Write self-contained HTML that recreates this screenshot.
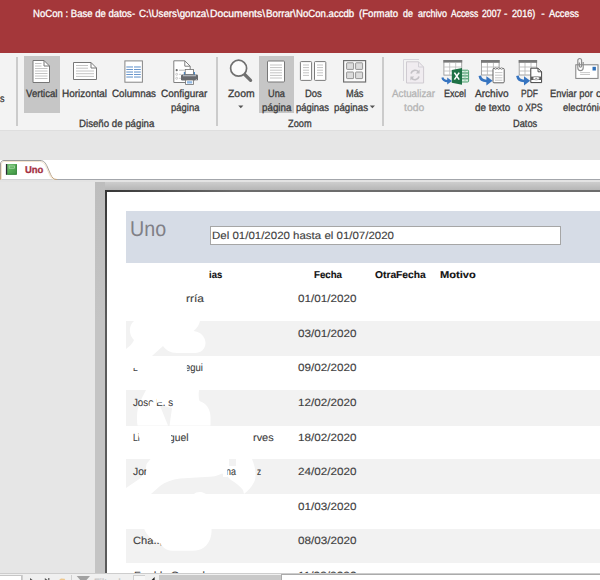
<!DOCTYPE html>
<html lang="es"><head><meta charset="utf-8"><title>NoCon : Base de datos - Access</title>
<style>
html,body{margin:0;padding:0;background:#e6e6e6}
#app{position:relative;width:600px;height:580px;overflow:hidden;background:#e6e6e6;font-family:"Liberation Sans",sans-serif}
#app div,#app svg{position:absolute}
.t{position:absolute;white-space:pre;transform-origin:0 0;line-height:1;-webkit-text-stroke:0.3px currentColor;text-rendering:geometricPrecision}
#titlebar{left:0;top:0;width:600px;height:53px;background:#a4373a}
#ribbon{left:0;top:53px;width:600px;height:77px;background:#f3f3f3}
#ribbon-edge{left:0;top:130px;width:600px;height:1px;background:#dedede}
.sep{top:57px;width:1.6px;height:69px;background:#cbcbcb}
.sel{top:56px;height:57px;background:#c6c6c6}
#tabstrip{left:0;top:160px;width:600px;height:19px;background:#fff}
#tabline{left:0;top:179px;width:600px;height:1px;background:#a3a6ab}
#preview{left:0;top:180px;width:600px;height:394px;background:#e6e6e6}
#shadow-l{left:95px;top:182px;width:10px;height:392px;background:linear-gradient(#bdbdbd,#c4c4c4 140px)}
#shadow-t{left:95px;top:182px;width:505px;height:8px;background:linear-gradient(#cdcdcd,#b6b6b6)}
#page{left:105px;top:190px;width:495px;height:384px;background:#fff}
#band{left:126px;top:211px;width:474px;height:52px;background:#d6dce6}
#tbox{left:210px;top:226px;width:351px;height:19px;box-sizing:border-box;background:#fff;border:1px solid #a6a6a6}
.alt{left:126px;width:474px;background:#f2f2f2}
#nav{left:0;top:573px;width:600px;height:7px;background:#f0f0f0;border-top:1px solid #cdcdcd;box-sizing:border-box}
#nav-rec{left:0;top:575px;width:22px;height:5px;background:#fff;border-top:1px solid #c6c6c6;border-right:1px solid #c6c6c6;box-sizing:border-box}
.nsep{top:575px;width:1px;height:5px;background:#d0d0d0}
#nav-track{left:159px;top:575px;width:122px;height:5px;background:#c9c9c9}
#nav-thumb{left:281px;top:574px;width:320px;height:7px;background:#fff;border:1px solid #ababab;box-sizing:border-box}
#pb-l{left:105px;top:190px;width:2px;height:383px;background:linear-gradient(#363636,#5a5a5a 130px)}
#pb-t{left:105px;top:190px;width:495px;height:1.5px;background:linear-gradient(90deg,#363636,#6c6c6c 130px)}
#lightband{left:0;top:180px;width:600px;height:2px;background:#e3e3e3}
#nav-btn{left:134px;top:575px;width:11px;height:5px;background:#f6f6f6;border-top:1px solid #cfcfcf;box-sizing:border-box}
#nav,#nav-rec,.nsep,#nav-track,#nav-thumb,#nav-btn,.navic{z-index:7}
.t.nv{z-index:8}
.blob{z-index:3}
.t{z-index:4}
.patch{z-index:5}
.t.big{-webkit-text-stroke:0}
.grp{left:0;top:0;width:0;height:0}
#report-text .t{-webkit-text-stroke:0.12px currentColor}
#report-text .t.big{-webkit-text-stroke:0}

</style></head>
<body>
<div id="app">
<div id="titlebar"></div>
<div id="ribbon"></div>
<div id="ribbon-edge"></div>
<div class="sep" style="left:16.2px"></div>
<div class="sep" style="left:216.2px"></div>
<div class="sep" style="left:382.4px"></div>
<div class="sel" style="left:24px;width:36px"></div>
<div class="sel" style="left:259px;width:35px"></div>
<div id="tabstrip"></div>
<div id="tabline"></div>
<div id="preview"></div>
<div id="lightband"></div>
<div id="shadow-t"></div>
<div id="shadow-l"></div>
<div id="page"></div>
<div id="pb-l"></div>
<div id="pb-t"></div>
<div id="band"></div>
<div id="tbox"></div>
<div class="alt" style="top:321px;height:34.5px"></div>
<div class="alt" style="top:390px;height:35.5px"></div>
<div class="alt" style="top:459px;height:34.5px"></div>
<div class="alt" style="top:528.6px;height:34px"></div>
<div id="nav"></div>

<!-- Vertical -->
<svg class="ic" style="left:30px;top:58px" width="24" height="28" viewBox="30 58 24 28">
 <path d="M33 60.5H44L49.5 66V82.5H33Z" fill="#fff" stroke="#777" stroke-width="1"/>
 <path d="M44 60.5V66H49.5" fill="none" stroke="#777" stroke-width="1"/>
 <g stroke="#c4c4c4" stroke-width="1"><path d="M35 63.5H41.5M35 66H41.5M35 68.5H47.5M35 71H47.5M35 73.5H47.5M35 76H47.5M35 78.5H47.5"/></g>
</svg>
<!-- Horizontal -->
<svg class="ic" style="left:70px;top:58px" width="30" height="28" viewBox="70 58 30 28">
 <path d="M73.5 62.5H91L96.5 68V79.5H73.5Z" fill="#fff" stroke="#777" stroke-width="1"/>
 <path d="M91 62.5V68H96.5" fill="none" stroke="#777" stroke-width="1"/>
 <g stroke="#c4c4c4" stroke-width="1"><path d="M76 65.5H88M76 68.2H88M76 71H94M76 73.7H94M76 76.4H94"/></g>
</svg>
<!-- Columnas -->
<svg class="ic" style="left:121px;top:58px" width="26" height="28" viewBox="121 58 26 28">
 <rect x="124.9" y="60.9" width="17.5" height="21.3" fill="#fff" stroke="#858585" stroke-width="1"/>
 <g fill="#a9c4e3"><rect x="126.3" y="66" width="6.7" height="1.9"/><rect x="134" y="66" width="6.8" height="1.9"/><rect x="126.3" y="71.1" width="6.7" height="1.9"/><rect x="134" y="71.1" width="6.8" height="1.9"/><rect x="126.3" y="76.1" width="6.7" height="1.9"/><rect x="134" y="76.1" width="6.8" height="1.9"/></g>
 <g fill="#5a8cc8"><rect x="126.3" y="69.1" width="6.7" height="0.9"/><rect x="134" y="69.1" width="6.8" height="0.9"/><rect x="126.3" y="74.1" width="6.7" height="0.9"/><rect x="134" y="74.1" width="6.8" height="0.9"/></g>
</svg>
<!-- Configurar pagina -->
<svg class="ic" style="left:170px;top:58px" width="32" height="28" viewBox="170 58 32 28">
 <path d="M173.8 60.8H184.8L190.2 66.2V82.5H173.8Z" fill="#fff" stroke="#808080" stroke-width="1"/>
 <path d="M184.8 60.8V66.2H190.2" fill="none" stroke="#808080" stroke-width="1"/>
 <circle cx="176.7" cy="70.2" r="1.1" fill="#6a6a6a"/>
 <g fill="none" stroke="#b4b4b4" stroke-width="0.7"><circle cx="176.7" cy="74.3" r="1"/><circle cx="176.7" cy="78.3" r="1"/><path d="M179 74.3H181M179 78.3H181"/></g>
 <path d="M179 70.2H184.5" stroke="#9a9a9a" stroke-width="0.7"/>
 <rect x="183.8" y="72" width="11.2" height="3.6" fill="#4d8fd0"/>
 <rect x="181" y="74.6" width="17" height="6" rx="1.3" fill="#686a6e"/>
 <rect x="183" y="75.4" width="13" height="0.8" fill="#d8dde4"/>
 <rect x="185.2" y="69.5" width="8.2" height="5" fill="#fff" stroke="#6e6e6e" stroke-width="0.8"/>
 <rect x="185.6" y="80" width="7.8" height="4.4" fill="#fff" stroke="#6e6e6e" stroke-width="0.8"/>
 <rect x="187" y="81.2" width="5.2" height="2.3" fill="#8fb8e4"/>
 <path d="M195 80.6L196.6 79L196.6 80.6Z" fill="#fff"/>
</svg>
<!-- Zoom -->
<svg class="ic" style="left:226px;top:57px" width="30" height="28" viewBox="226 57 30 28">
 <path d="M244.2 74L250.6 80.4" stroke="#707070" stroke-width="3.2" stroke-linecap="round"/>
 <circle cx="238.6" cy="68.2" r="8" fill="#fbfbfb" stroke="#707070" stroke-width="1.7"/>
</svg>
<!-- Una pagina -->
<svg class="ic" style="left:264px;top:58px" width="24" height="28" viewBox="264 58 24 28">
 <rect x="267.5" y="61" width="17" height="21" rx="1" fill="#fff" stroke="#777" stroke-width="1"/>
 <g stroke="#c4c4c4" stroke-width="1"><path d="M270 65H282M270 67.6H282M270 70.2H282M270 72.8H282M270 75.4H282M270 78H282"/></g>
</svg>
<!-- Dos paginas -->
<svg class="ic" style="left:297px;top:58px" width="32" height="28" viewBox="297 58 32 28">
 <rect x="300.4" y="61.6" width="11.2" height="18.8" rx="0.8" fill="#fff" stroke="#7a7a7a" stroke-width="1"/>
 <rect x="314.5" y="61.6" width="11.3" height="18.8" rx="0.8" fill="#fff" stroke="#7a7a7a" stroke-width="1"/>
 <g stroke="#c4c4c4" stroke-width="1"><path d="M303 65H309M303 67.6H309M303 70.2H309M303 72.8H309M303 75.4H309M317 65H323M317 67.6H323M317 70.2H323M317 72.8H323M317 75.4H323"/></g>
</svg>
<!-- Mas paginas -->
<svg class="ic" style="left:340px;top:58px" width="30" height="28" viewBox="340 58 30 28">
 <rect x="343.6" y="60.6" width="22" height="21.4" fill="#fbfbfb" stroke="#707070" stroke-width="1.2"/>
 <g fill="#dcdcdc" stroke="#8a8a8a" stroke-width="0.9">
  <rect x="346.6" y="62.8" width="7" height="6.6" rx="0.6"/><rect x="355.6" y="62.8" width="7" height="6.6" rx="0.6"/>
  <rect x="346.6" y="72" width="7" height="6.6" rx="0.6"/><rect x="355.6" y="72" width="7" height="6.6" rx="0.6"/>
 </g>
</svg>
<!-- Actualizar todo (disabled) -->
<svg class="ic" style="left:400px;top:57px" width="28" height="30" viewBox="400 57 28 30">
 <path d="M403.5 81V59.5H419" fill="none" stroke="#d6d4da" stroke-width="1"/>
 <path d="M406.5 61.8H418.5L423.6 67V83H406.5Z" fill="#f0ecf0" stroke="#cfcbd1" stroke-width="1"/>
 <path d="M418.5 61.8V67H423.6" fill="none" stroke="#d2d0d6" stroke-width="1"/>
 <g fill="none" stroke="#c4c2c6" stroke-width="1.7"><path d="M411 73.5A4.3 4.3 0 0 1 418.6 72"/><path d="M419 76.5A4.3 4.3 0 0 1 411.4 78"/></g>
 <path d="M419.6 69.6V73.4H415.8Z" fill="#c4c2c6"/><path d="M410.4 80.4V76.6H414.2Z" fill="#c4c2c6"/>
</svg>
<!-- Excel -->
<svg class="ic" style="left:440px;top:58px" width="32" height="28" viewBox="440 58 32 28">
 <rect x="443.9" y="60.5" width="17.8" height="14.6" fill="#fff" stroke="#9a9a9a" stroke-width="0.9"/>
 <rect x="443.4" y="60" width="18.8" height="2.6" fill="#787878"/>
 <g stroke="#bcbcbc" stroke-width="0.8"><path d="M449.7 63V75M455.7 63V75M444 67H461.5M444 71H461.5"/></g>
 <rect x="461" y="70.2" width="7.6" height="11.8" rx="1" fill="#d9eee1" stroke="#3a9660" stroke-width="0.9"/>
 <g stroke="#23804c" stroke-width="0.9"><path d="M462 73H468M462 75.9H468M462 78.8H468"/></g>
 <path d="M465 70.6V81.6" stroke="#8cc7a3" stroke-width="0.8"/>
 <path d="M451.8 69.9L462 68V84.7L451.8 82.7Z" fill="#1e7145"/>
 <path d="M454.4 72.6L459.2 79.6M459.2 72.6L454.4 79.6" stroke="#fff" stroke-width="1.6" fill="none"/>
 <path d="M442.4 77.4C443 80 445.4 81.2 448.4 81" fill="none" stroke="#3674c0" stroke-width="2.2"/>
 <path d="M447.2 77.6L452 81L447.2 84.4Z" fill="#3674c0"/>
</svg>
<!-- Archivo de texto -->
<svg class="ic" style="left:477px;top:58px" width="32" height="28" viewBox="477 58 32 28">
 <rect x="481.5" y="60.5" width="17.6" height="14.5" fill="#fff" stroke="#9a9a9a" stroke-width="0.9"/>
 <rect x="481" y="60" width="18.6" height="2.8" fill="#777"/>
 <g stroke="#b4b4b4" stroke-width="0.8"><path d="M487.4 63V75M493.4 63V75M481.5 67H499M481.5 71H499"/></g>
 <rect x="493" y="68.4" width="11.2" height="14.4" rx="1" fill="#fff" stroke="#626262" stroke-width="1"/>
 <g fill="#fff" stroke="#777" stroke-width="0.6"><circle cx="495.6" cy="68.6" r="0.9"/><circle cx="498.6" cy="68.6" r="0.9"/><circle cx="501.6" cy="68.6" r="0.9"/></g>
 <g stroke="#b8b8b8" stroke-width="0.8"><path d="M495 72.6H502.4M495 75.2H502.4M495 77.8H502.4M495 80.2H502.4"/></g>
 <path d="M479.8 75.8C480.4 79.6 483.6 81.2 487.6 80.9" fill="none" stroke="#3674c0" stroke-width="2.6"/>
 <path d="M486.4 76.2L492.6 80.8L486.4 85.4Z" fill="#3674c0"/>
</svg>
<!-- PDF o XPS -->
<svg class="ic" style="left:515px;top:58px" width="32" height="28" viewBox="515 58 32 28">
 <rect x="519.2" y="60.5" width="17.4" height="14.5" fill="#fff" stroke="#9a9a9a" stroke-width="0.9"/>
 <rect x="518.7" y="60" width="18.4" height="2.8" fill="#777"/>
 <g stroke="#b4b4b4" stroke-width="0.8"><path d="M525 63V75M531 63V75M519.2 67H536.6M519.2 71H536.6"/></g>
 <path d="M530.8 68.2H538L541.6 71.8V82.6H530.8Z" fill="#fff" stroke="#444" stroke-width="1"/>
 <path d="M538 68.2V71.8H541.6" fill="none" stroke="#444" stroke-width="0.9"/>
 <rect x="530.8" y="76.6" width="10.8" height="3.4" fill="#5c5c5c"/>
 <ellipse cx="536.2" cy="78.2" rx="3.2" ry="1.7" fill="#fff" stroke="#8a8a8a" stroke-width="0.7"/>
 <ellipse cx="536.2" cy="78.2" rx="1.2" ry="0.8" fill="#9a9a9a"/>
 <path d="M517.4 75.8C518 79.6 521.2 81.2 525.2 80.9" fill="none" stroke="#3674c0" stroke-width="2.6"/>
 <path d="M524 76.2L530.2 80.8L524 85.4Z" fill="#3674c0"/>
</svg>
<!-- Enviar por correo -->
<svg class="ic" style="left:572px;top:56px" width="28" height="26" viewBox="572 56 28 26">
 <rect x="575.8" y="64.8" width="22.2" height="13.6" fill="#fff" stroke="#808080" stroke-width="1"/>
 <path d="M598.3 65V78.6" stroke="#b4b4b4" stroke-width="0.9"/>
 <rect x="592.5" y="66.8" width="3.4" height="3.7" fill="#2e6fb8"/>
 <g stroke="#c2c2c2" stroke-width="0.9"><path d="M580.1 72.6H590M580.1 74.5H590"/></g>
 <path d="M583.2 62V67.7A2.7 2.9 0 0 1 577.8 67.7V60.5A1.9 2 0 0 1 581.6 60.5V66A1.1 1.1 0 0 1 579.4 66V62.4" fill="none" stroke="#8c8c8c" stroke-width="1.15"/>
</svg>
<!-- dropdown arrows -->
<svg class="ic" style="left:237px;top:104px" width="8" height="6" viewBox="0 0 8 6"><path d="M1.2 1.4H6.4L3.8 4.2Z" fill="#555"/></svg>
<svg class="ic" style="left:369px;top:104px" width="8" height="6" viewBox="0 0 8 6"><path d="M0.8 1.4H6L3.4 4.2Z" fill="#555"/></svg>
<!-- document tab -->
<svg class="ic" style="left:0;top:158px" width="62" height="23" viewBox="0 158 62 23">
 <defs><linearGradient id="tg" x1="0" y1="0" x2="0" y2="1"><stop offset="0" stop-color="#9a9a9a"/><stop offset="0.45" stop-color="#a8a29a"/><stop offset="1" stop-color="#c9a57a"/></linearGradient>
 <linearGradient id="bk" x1="0" y1="0" x2="1" y2="1"><stop offset="0" stop-color="#7cc47c"/><stop offset="0.5" stop-color="#56ad56"/><stop offset="1" stop-color="#3f9445"/></linearGradient></defs>
 <path d="M0 179.5V164C0 162 1.6 160.5 4 160.5H40C44 160.5 45.6 163 47.4 167L50.6 174.4C52 177.6 53.6 179.5 57 179.5Z" fill="#fff"/>
 <path d="M1.5 179.5V164.6C1.5 162.6 2.8 161.5 4.8 161.5H39.6C43.2 161.5 44.7 163.8 46.4 167.6L49.6 175C50.6 177.4 51.8 178.8 53.6 179.4" fill="none" stroke="#f3e4cd" stroke-width="1"/>
 <path d="M0.5 179.5V164C0.5 162 1.9 160.5 4 160.5H40C44 160.5 45.6 163 47.4 167L50.6 174.4C52 177.6 53.6 179.5 57 179.5" fill="none" stroke="url(#tg)" stroke-width="1"/>
 <rect x="6" y="164" width="10.8" height="10.7" fill="url(#bk)"/>
 <path d="M16.4 164.4V174.3H7.4" fill="none" stroke="#2f7d36" stroke-width="0.8"/>
 <rect x="5.9" y="164" width="1.3" height="10.7" fill="#2b2b33"/>
 <rect x="9.2" y="166" width="5.2" height="2.2" fill="#5cb25c" stroke="#b4deb4" stroke-width="0.7"/>
</svg>
<!-- redaction blobs (under text) -->
<svg class="ic blob" style="left:120px;top:315px" width="180" height="245" viewBox="120 315 180 245">
 <g fill="#fff">
  <!-- row 2 -->
  <path d="M134 321H200C199 325 197 328.5 193.5 331C200 331.5 205.5 336.5 205.5 343C205.5 349 201 353 195 353H177C170 353 166 350 163 346L152 356H126V349C129.5 346.5 132.5 343.5 134 340C129 335 128 326 134 321Z"/>
  <!-- row 4 -->
  <path d="M146 390H199C198.5 394 198.5 398 199.5 401C206 403 210.5 409 210.5 417V425.5H169.5L172 408C168 407 163 405.5 159.5 404.5L168 425.5H137.5C136.5 418 137 410 139 405C141 399 144 394 146 390Z"/>
  <!-- row 6 -->
  <path d="M150.5 459H229V466H236V459H252C255 466 256.5 474 255 480C252 487 248 491 244 494L243 490C240 486 236 483 231 480C228 477 225 474 222 473.5C218 476 212 477 205 477L180 478.5C172 479.5 165 482 160 486L151 494H126V488L140 478.5C144 474 146.5 469 146.5 464Z"/>
  <path d="M194 494C196 491.5 202 491 206 494Z"/>
 </g>
</svg>
<!-- redaction patches (over text) -->
<svg class="ic patch" style="left:120px;top:355px" width="180" height="205" viewBox="120 355 180 205">
 <g fill="#fff">
  <path d="M131 360H141V368.2C138 367.6 134 367.8 131 368.4Z"/>
  <path d="M184 362H187.2C186.6 366 186.8 370 187.6 374H184Z"/>
  <path d="M167 430H171.2C170.8 435 171 440 171.8 445H167Z"/>
  <path d="M138.6 430H141V437.5H138.6Z"/>
  <path d="M149.6 402.2C151.5 401.2 153.5 401.6 155.6 403.4V409H149.6Z"/>
  <path d="M156.6 396H164V402.6C161.5 402 159 402.4 156.6 403Z"/>
  <path d="M146.2 467.5H150V476H146.2Z"/>
  <path d="M223 468H227.4V477H223Z"/>
  <!-- row 8 -->
  <path d="M144 528.6H211.5C212 536 209.5 543.5 204 547.5C200.5 549.8 197 550.7 193 550.7H172C166 550.5 162.5 547 160 543C153 541.5 147 536 144 528.6Z"/>
 </g>
</svg>
<!-- nav bar pieces -->
<div id="nav-rec"></div>
<div class="nsep" style="left:22px"></div>
<div class="nsep" style="left:71px"></div>
<div class="nsep" style="left:133px"></div>
<div id="nav-track"></div>
<div id="nav-thumb"></div>
<div id="nav-btn"></div>
<svg class="ic navic" style="left:26px;top:574px" width="135" height="6" viewBox="26 574 135 6">
 <path d="M30 578L32.6 580H30Z" fill="#555"/>
 <path d="M44.8 578L47.6 580H44.8Z" fill="#555"/><path d="M48.8 578V580" stroke="#555" stroke-width="1.2"/>
 <path d="M59 580L61 578.6L64.6 578.8L65.2 580Z" fill="#eec88e"/>
 <path d="M76.7 576H90L86.5 580H80.2Z" fill="#a2a2a2"/>
 <path d="M154.6 577L151.6 580H154.6Z" fill="#222"/>
</svg>


<div id="title-text" class="grp">
<span class="t" style="left:32.90px;top:9.11px;font-size:10.5px;color:#ffffff;transform:scaleX(0.9110)">NoCon : Base de datos-</span>
<span class="t" style="left:139.00px;top:9.11px;font-size:10.5px;color:#ffffff;transform:scaleX(0.9298)">C:\Users\gonza\</span>
<span class="t" style="left:210.00px;top:9.11px;font-size:10.5px;color:#ffffff;transform:scaleX(0.9816)">Documents\</span>
<span class="t" style="left:265.80px;top:9.11px;font-size:10.5px;color:#ffffff;transform:scaleX(0.9285)">Borrar\</span>
<span class="t" style="left:296.40px;top:9.11px;font-size:10.5px;color:#ffffff;transform:scaleX(0.9147)">NoCon.accdb</span>
<span class="t" style="left:359.30px;top:9.11px;font-size:10.5px;color:#ffffff;transform:scaleX(0.9156)">(Formato</span>
<span class="t" style="left:403.30px;top:9.11px;font-size:10.5px;color:#ffffff;transform:scaleX(0.8556)">de</span>
<span class="t" style="left:417.70px;top:9.11px;font-size:10.5px;color:#ffffff;transform:scaleX(0.8565)">archivo</span>
<span class="t" style="left:451.00px;top:9.11px;font-size:10.5px;color:#ffffff;transform:scaleX(0.8066)">Access</span>
<span class="t" style="left:481.70px;top:9.11px;font-size:10.5px;color:#ffffff;transform:scaleX(0.8262)">2007</span>
<span class="t" style="left:503.60px;top:9.11px;font-size:10.5px;color:#ffffff;transform:scaleX(0.9714)">-</span>
<span class="t" style="left:511.70px;top:9.11px;font-size:10.5px;color:#ffffff;transform:scaleX(0.8675)">2016)</span>
<span class="t" style="left:541.30px;top:9.11px;font-size:10.5px;color:#ffffff;transform:scaleX(1.0000)">-</span>
<span class="t" style="left:549.30px;top:9.11px;font-size:10.5px;color:#ffffff;transform:scaleX(0.8864)">Access</span>
</div>
<div id="ribbon-labels" class="grp">
<span class="t" style="left:0.30px;top:93.61px;font-size:10.5px;color:#3a3a3a;transform:scaleX(0.8571)">s</span>
<span class="t" style="left:25.70px;top:89.43px;font-size:10.6px;color:#3a3a3a;transform:scaleX(0.9065)">Vertical</span>
<span class="t" style="left:62.00px;top:89.43px;font-size:10.6px;color:#3a3a3a;transform:scaleX(0.9433)">Horizontal</span>
<span class="t" style="left:112.00px;top:89.43px;font-size:10.6px;color:#3a3a3a;transform:scaleX(0.9224)">Columnas</span>
<span class="t" style="left:161.00px;top:89.43px;font-size:10.6px;color:#3a3a3a;transform:scaleX(0.9359)">Configurar</span>
<span class="t" style="left:170.60px;top:103.43px;font-size:10.6px;color:#3a3a3a;transform:scaleX(0.8927)">página</span>
<span class="t" style="left:79.20px;top:118.93px;font-size:10.6px;color:#3a3a3a;transform:scaleX(0.9131)">Diseño de página</span>
<span class="t" style="left:227.90px;top:89.43px;font-size:10.6px;color:#3a3a3a;transform:scaleX(0.9818)">Zoom</span>
<span class="t" style="left:267.50px;top:89.43px;font-size:10.6px;color:#3a3a3a;transform:scaleX(0.8695)">Una</span>
<span class="t" style="left:261.80px;top:103.43px;font-size:10.6px;color:#3a3a3a;transform:scaleX(0.9242)">página</span>
<span class="t" style="left:304.70px;top:89.43px;font-size:10.6px;color:#3a3a3a;transform:scaleX(0.8915)">Dos</span>
<span class="t" style="left:296.00px;top:103.43px;font-size:10.6px;color:#3a3a3a;transform:scaleX(0.8893)">páginas</span>
<span class="t" style="left:346.00px;top:89.43px;font-size:10.6px;color:#3a3a3a;transform:scaleX(0.8693)">Más</span>
<span class="t" style="left:334.00px;top:103.43px;font-size:10.6px;color:#3a3a3a;transform:scaleX(0.9162)">páginas</span>
<span class="t" style="left:288.00px;top:118.93px;font-size:10.6px;color:#3a3a3a;transform:scaleX(0.8710)">Zoom</span>
<span class="t" style="left:392.00px;top:89.43px;font-size:10.6px;color:#b3b3b3;transform:scaleX(0.9244)">Actualizar</span>
<span class="t" style="left:403.80px;top:103.43px;font-size:10.6px;color:#b3b3b3;transform:scaleX(0.9794)">todo</span>
<span class="t" style="left:443.80px;top:89.43px;font-size:10.6px;color:#3a3a3a;transform:scaleX(0.8531)">Excel</span>
<span class="t" style="left:475.40px;top:89.43px;font-size:10.6px;color:#3a3a3a;transform:scaleX(0.9511)">Archivo</span>
<span class="t" style="left:474.80px;top:103.43px;font-size:10.6px;color:#3a3a3a;transform:scaleX(0.9336)">de texto</span>
<span class="t" style="left:521.40px;top:89.43px;font-size:10.6px;color:#3a3a3a;transform:scaleX(0.7976)">PDF</span>
<span class="t" style="left:518.00px;top:103.43px;font-size:10.6px;color:#3a3a3a;transform:scaleX(0.8187)">o XPS</span>
<span class="t" style="left:513.00px;top:118.93px;font-size:10.6px;color:#3a3a3a;transform:scaleX(0.8740)">Datos</span>
<span class="t" style="left:549.70px;top:89.43px;font-size:10.6px;color:#3a3a3a;transform:scaleX(0.8862)">Enviar por</span>
<span class="t" style="left:596.00px;top:89.43px;font-size:10.6px;color:#3a3a3a;transform:scaleX(0.9990)">correo</span>
<span class="t" style="left:563.00px;top:103.43px;font-size:10.6px;color:#3a3a3a;transform:scaleX(0.8940)">electróni</span>
<span class="t" style="left:599.00px;top:103.43px;font-size:10.6px;color:#3a3a3a;transform:scaleX(0.9819)">co</span>
</div>
<div id="tab-label" class="grp">
<span class="t" style="left:25.00px;top:166.02px;font-size:9.9px;color:#a5303f;transform:scaleX(0.9582);font-weight:700">Uno</span>
</div>
<div id="report-text" class="grp">
<span class="t big" style="left:130.30px;top:218.68px;font-size:21.4px;color:#808087;transform:scaleX(0.9197)">Uno</span>
<span class="t" style="left:212.00px;top:230.86px;font-size:10.5px;color:#404040;transform:scaleX(1.0938)">Del 01/01/2020 hasta el 01/07/2020</span>
<span class="t" style="left:209.00px;top:270.54px;font-size:10px;color:#111;transform:scaleX(0.9492);font-weight:700">ias</span>
<span class="t" style="left:313.75px;top:270.54px;font-size:10px;color:#111;transform:scaleX(0.9686);font-weight:700">Fecha</span>
<span class="t" style="left:375.00px;top:270.54px;font-size:10px;color:#111;transform:scaleX(1.0259);font-weight:700">OtraFecha</span>
<span class="t" style="left:440.00px;top:270.54px;font-size:10px;color:#111;transform:scaleX(1.1096);font-weight:700">Motivo</span>
<span class="t" style="left:298.00px;top:294.01px;font-size:10.5px;color:#404040;transform:scaleX(1.1130)">01/01/2020</span>
<span class="t" style="left:298.00px;top:328.64px;font-size:10.5px;color:#404040;transform:scaleX(1.1130)">03/01/2020</span>
<span class="t" style="left:298.00px;top:363.27px;font-size:10.5px;color:#404040;transform:scaleX(1.1130)">09/02/2020</span>
<span class="t" style="left:298.00px;top:397.90px;font-size:10.5px;color:#404040;transform:scaleX(1.1130)">12/02/2020</span>
<span class="t" style="left:298.00px;top:432.53px;font-size:10.5px;color:#404040;transform:scaleX(1.1130)">18/02/2020</span>
<span class="t" style="left:298.00px;top:467.16px;font-size:10.5px;color:#404040;transform:scaleX(1.1130)">24/02/2020</span>
<span class="t" style="left:298.00px;top:501.79px;font-size:10.5px;color:#404040;transform:scaleX(1.1130)">01/03/2020</span>
<span class="t" style="left:298.00px;top:536.42px;font-size:10.5px;color:#404040;transform:scaleX(1.1130)">08/03/2020</span>
<span class="t" style="left:298.00px;top:571.05px;font-size:10.5px;color:#404040;transform:scaleX(1.1298)">11/03/2020</span>
<span class="t" style="left:186.00px;top:294.01px;font-size:10.5px;color:#404040;transform:scaleX(1.1429)">rría</span>
<span class="t" style="left:133.30px;top:363.27px;font-size:10.5px;color:#404040;transform:scaleX(0.8043)">L</span>
<span class="t" style="left:185.30px;top:363.27px;font-size:10.5px;color:#404040;transform:scaleX(0.9013)">egui</span>
<span class="t" style="left:133.30px;top:397.90px;font-size:10.5px;color:#404040;transform:scaleX(0.9262)">Jose E. s</span>
<span class="t" style="left:133.30px;top:432.53px;font-size:10.5px;color:#404040;transform:scaleX(0.8183)">Li</span>
<span class="t" style="left:169.30px;top:432.53px;font-size:10.5px;color:#404040;transform:scaleX(0.9819)">guel</span>
<span class="t" style="left:253.30px;top:432.53px;font-size:10.5px;color:#404040;transform:scaleX(1.0431)">rves</span>
<span class="t" style="left:133.30px;top:467.16px;font-size:10.5px;color:#404040;transform:scaleX(0.9799)">Jor</span>
<span class="t" style="left:225.60px;top:467.16px;font-size:10.5px;color:#404040;transform:scaleX(0.8471)">na</span>
<span class="t" style="left:257.40px;top:467.16px;font-size:10.5px;color:#404040;transform:scaleX(0.7810)">z</span>
<span class="t" style="left:133.30px;top:536.42px;font-size:10.5px;color:#404040;transform:scaleX(1.0601)">Cha..,</span>
<span class="t" style="left:134.00px;top:571.05px;font-size:10.5px;color:#404040;transform:scaleX(1.0309)">Freddy Gonzal</span>
</div>
<div id="nav-text" class="grp">
<span class="t nv" style="left:94.00px;top:577.71px;font-size:10.5px;color:#c4c4c4;transform:scaleX(0.9139)">Filtrado</span>
</div>
</div>
</body></html>
